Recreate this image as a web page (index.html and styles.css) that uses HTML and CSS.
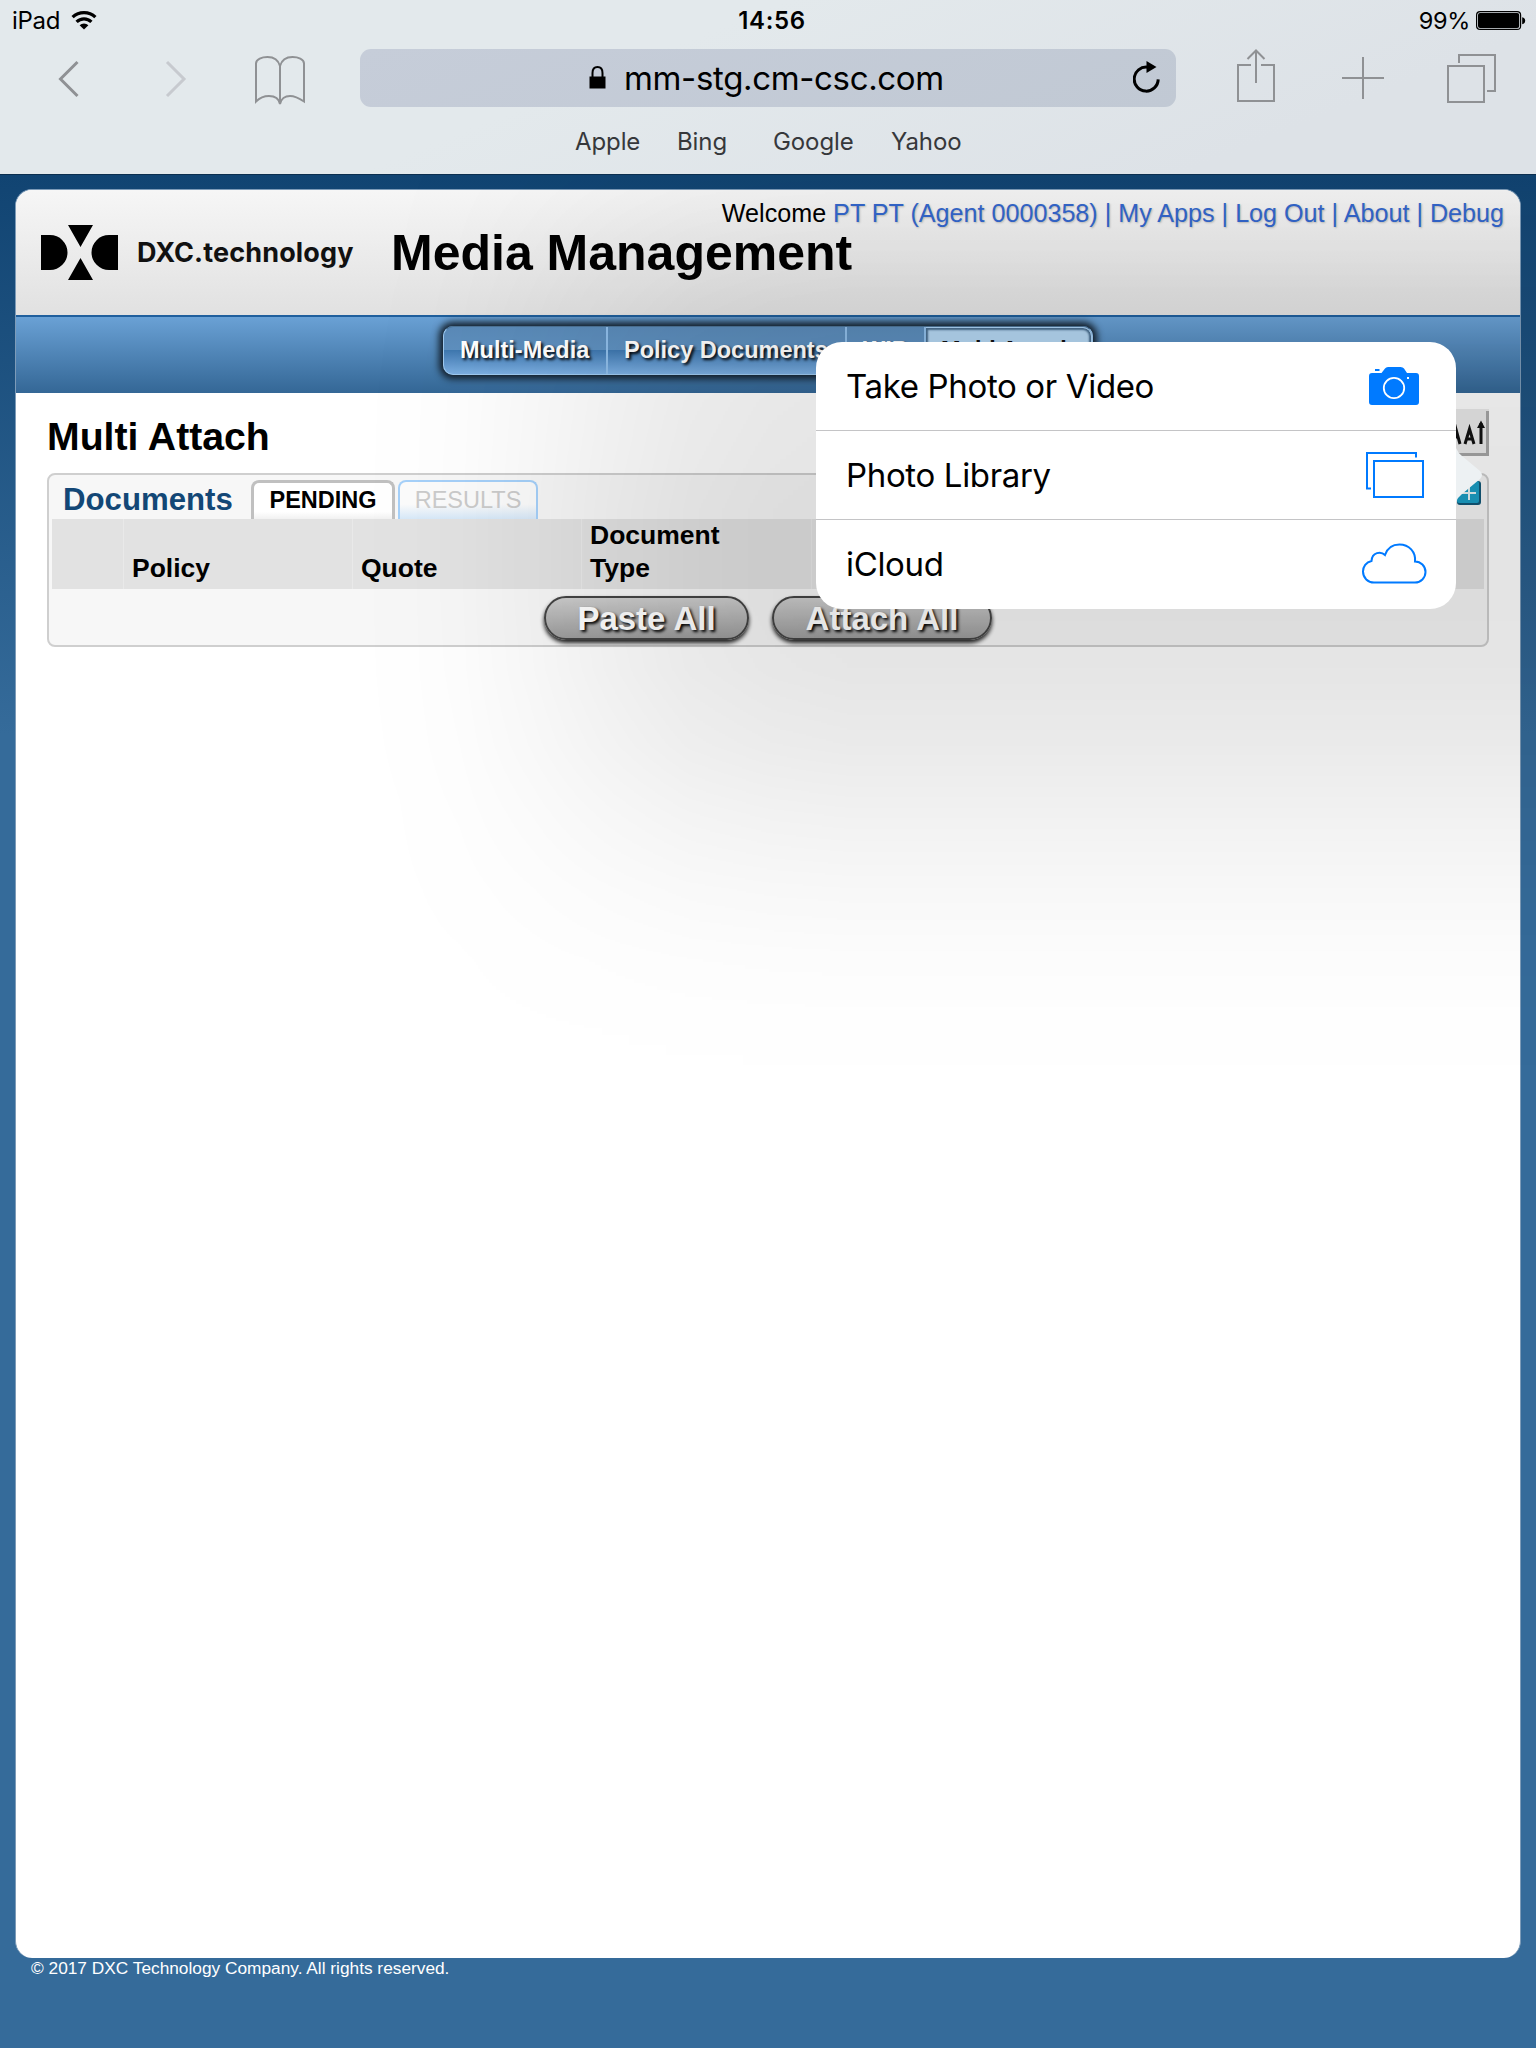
FILE: index.html
```html
<!DOCTYPE html>
<html lang="en">
<head>
<meta charset="utf-8">
<title>Media Management</title>
<link rel="stylesheet" href="styles.css">
</head>
<body>
<div class="browser">
  <header class="chrome">
    <div class="status">
      <div class="status-left"><span class="device">iPad</span>
        <svg class="wifi" width="26" height="20" viewBox="0 0 26 20"><g fill="none" stroke="#000" stroke-width="3.2"><path d="M1.6 7.2A16.3 16.3 0 0 1 24.4 7.2"/><path d="M5.6 11.9A10.5 10.5 0 0 1 20.4 11.9"/></g><path d="M8.6 15.2A6.6 6.6 0 0 1 17.400 15.2L13 19.600Z"/></svg>
      </div>
      <span class="clock">14:56</span>
      <div class="status-right"><span class="percent">99%</span>
        <svg class="battery" width="50" height="20" viewBox="0 0 50 20"><rect x=".6" y=".6" width="44" height="17.800" rx="3.500" fill="none" stroke="#000" stroke-width="1.200"/><rect x="2" y="2" width="41.200" height="15" rx="2"/><path d="M46.200 6.200q3 .6 3 3.500t-3 3.500z"/></svg>
      </div>
    </div>
    <div class="toolbar">
      <svg class="icon-back" width="22" height="38" viewBox="0 0 22 38"><path d="M19.500 2 2.500 19l17 17" fill="none" stroke="#8f9194" stroke-width="3"/></svg>
      <svg class="icon-forward" width="22" height="38" viewBox="0 0 22 38"><path d="M2 2l17 17L2 36" fill="none" stroke="#c7cacf" stroke-width="3"/></svg>
      <svg class="icon-book" width="52" height="50" viewBox="0 0 52 50"><path d="M26 49V11C24 4 18 2 13.500 2 8 2 2 4 2 8.500V46.500C5 43.500 10 41 15 41c6 0 10 3 11 8 1-5 5-8 10-8 5 0 9.500 2.500 14 5.500V8.500C50 4 44 2 38.500 2 34 2 28 4 26 11" fill="none" stroke="#8f9194" stroke-width="2"/></svg>
      <div class="address">
        <svg class="lock" width="17" height="23" viewBox="0 0 17 23"><path d="M.5 10.500h16V22.500H.5z"/><path d="M3.500 11V7q0-6 5-6t5 6v4" fill="none" stroke="#000" stroke-width="2"/></svg>
        <span class="url">mm-stg.cm-csc.com</span>
        <svg class="reload" width="28" height="32" viewBox="0 0 28 32"><path d="M25.200 18.400A12 12 0 1 1 14.500 6.200" fill="none" stroke="#000" stroke-width="3"/><path d="M13.500 0 23.500 6 13.500 12z"/></svg>
      </div>
      <svg class="icon-share" width="40" height="54" viewBox="0 0 40 54"><g fill="none" stroke="#8f9194" stroke-width="2"><path d="M15 16H2v36h36V16H25M20 34V2M11.500 10 20 1.500 28.500 10"/></g></svg>
      <svg class="icon-plus" width="42" height="42" viewBox="0 0 42 42"><path d="M21 0v42M0 21h42" stroke="#8f9194" stroke-width="2"/></svg>
      <svg class="icon-tabs" width="50" height="50" viewBox="0 0 50 50"><path d="M1 13h36v36H1zM12 10V2h36v36h-8" fill="none" stroke="#8f9194" stroke-width="2"/></svg>
    </div>
    <nav class="favorites"><span>Apple</span><span>Bing</span><span>Google</span><span>Yahoo</span></nav>
  </header>

  <div class="page">
    <main class="card">
      <div class="masthead">
        <div class="account">Welcome <span class="links">PT PT (Agent 0000358) | My Apps | Log Out | About | Debug</span></div>
        <div class="brand">
          <svg class="mark" width="80" height="57" viewBox="0 0 80 57"><path d="M1 11h9a17 17 0 0 1 0 35H1zM78 11h-9a17 17 0 0 0 0 35h9zM28 1h25L40.500 23zM40.500 34 53 56H28z"/></svg>
          <span class="wordmark">DXC.technology</span>
          <h1 class="app-title">Media Management</h1>
        </div>
      </div>
      <nav class="tabsbar">
        <div class="tabs">
          <span class="tab tab-media">Multi-Media</span>
          <span class="tab tab-policy">Policy Documents</span>
          <span class="tab tab-wip">WIP</span>
          <span class="tab tab-attach">Multi Attach</span>
        </div>
      </nav>
      <section class="content">
        <div class="content-head">
          <h2 class="content-title">Multi Attach</h2>
          <svg class="text-size" width="64" height="47" viewBox="0 0 64 47"><rect width="64" height="47" fill="#ececec"/><path d="M62.500 2v44M0 45.500h64" stroke="#a8a8a8" stroke-width="3"/><path d="M22 35 29 13l6 22M24 28h9M40 35l4.500-15L49 35M41.500 30h6M56 35V14" fill="none" stroke="#111" stroke-width="3"/><path d="M52 19 56 11.500 60 19z" fill="#111"/></svg>
        </div>
        <div class="panel">
          <div class="panel-head">
            <h3 class="panel-title">Documents</h3>
            <span class="subtab active">PENDING</span>
            <span class="subtab muted">RESULTS</span>
            <svg class="add" width="24" height="24" viewBox="0 0 24 24"><rect width="24" height="24" rx="3" fill="#125878"/><rect width="22" height="22" rx="2" fill="#1b9fc6"/><path d="M12 5v14M5 12h14" stroke="#e8f4f7" stroke-width="2"/></svg>
          </div>
          <div class="thead">
            <span></span><span class="th">Policy</span><span class="th">Quote</span><span class="th">Document<br>Type</span><span class="th"></span>
          </div>
          <div class="actions">
            <span class="btn btn-paste">Paste All</span>
            <span class="btn btn-attach">Attach All</span>
          </div>
        </div>
      </section>
    </main>
    <footer class="copyright">© 2017 DXC Technology Company. All rights reserved.</footer>
  </div>

  <div class="shade"></div>
  <div class="popover">
    <svg class="popover-arrow" width="27" height="56" viewBox="0 0 27 56"><path d="M0 0Q2 5 6 8L24 23q4 4 0 8L6 46Q2 49 0 54z" fill="#edf1f3"/></svg>
    <div class="option"><span>Take Photo or Video</span>
      <svg class="camera" width="50" height="38" viewBox="0 0 50 38"><path d="M3 6H12.500L16 1.500Q17 0 19 0H31.500Q34 0 35 1.500L38 6h9q3 0 3 3V35q0 3-3 3H3q-3 0-3-3V9Q0 6 3 6zM6 2h4.500v2H6z" fill="#007aff"/><circle cx="25" cy="21" r="10.200" fill="none" stroke="#fff" stroke-width="1.800"/><path d="M38 10h2v2h-2z" fill="#fff"/></svg>
    </div>
    <div class="option"><span>Photo Library</span>
      <svg class="photos" width="58" height="47" viewBox="0 0 58 47"><path d="M8 10h49v36H8zM50 6.500V2H1v35.500h4" fill="none" stroke="#007aff" stroke-width="2"/></svg>
    </div>
    <div class="option"><span>iCloud</span>
      <svg class="cloud" width="65" height="41" viewBox="0 0 65 41"><path d="M12 39.500H53a10.500 10.500 0 0 0 0-21C54 9 47 1.500 37.500 1.500 30 1.500 25 6 23 12 19 8 10 9 9.500 18 4 19 1 24 1 28.500 1 35 6 39.500 12 39.500z" fill="none" stroke="#007aff" stroke-width="2"/></svg>
    </div>
  </div>
</div>
</body>
</html>
```
FILE: styles.css
```css
* { box-sizing: border-box; }
body { margin: 0; width: 1536px; height: 2048px; overflow: hidden; font-family: "Liberation Sans", Arial, sans-serif; color: #000; }
h1, h2, h3 { margin: 0; }
svg { display: block; flex: none; }
.browser { position: relative; display: flex; flex-direction: column; height: 2048px; overflow: hidden; }

/* browser chrome */
.chrome { position: relative; z-index: 3; height: 175px; flex: none; font-family: Inter, sans-serif; background: linear-gradient(158deg, #e3e9ec 40%, #dde2e7 82%); border-bottom: 1px solid #0c2f4f; }
.status { height: 41px; display: grid; grid-template-columns: 1fr auto 1fr; align-items: center; padding: 0 10px 0 12px; font-size: 24px; line-height: 41px; }
.status-left { display: flex; align-items: center; gap: 11px; }
.device { letter-spacing: -0.3px; }
.wifi { margin-top: -2px; }
.status-right { display: flex; align-items: center; justify-content: flex-end; gap: 6px; }
.percent { font-size: 23.500px; letter-spacing: -0.300px; }
.clock { font-weight: 600; letter-spacing: .7px; padding-left: 6px; }
.toolbar { height: 74px; display: flex; align-items: flex-start; padding: 8px 30px 0 58px; }
.icon-back { margin-top: 11px; }
.icon-forward { margin: 11px 0 0 85px; }
.icon-book { margin: 6px 0 0 67px; }
.address { flex: none; display: flex; align-items: center; width: 816px; height: 58px; margin-left: 54px; border-radius: 11px; background: linear-gradient(160deg, #c6cdd9, #c1c9d4); padding: 0 15px 0 229px; }
.lock { margin-top: -1px; }
.url { margin: -1px 0 0 18px; font-size: 33px; letter-spacing: -0.350px; flex: 1; white-space: nowrap; }
.reload { margin-top: -3px; }
.icon-share { margin-left: 60px; }
.icon-plus { margin: 8px 0 0 66px; }
.icon-tabs { margin: 4px 0 0 63px; }
.favorites { display: flex; padding-left: 575px; font-size: 24px; letter-spacing: -0.1px; line-height: 54px; color: #36383b; }
.favorites span:nth-child(1) { width: 102px; }
.favorites span:nth-child(2) { width: 96px; }
.favorites span:nth-child(3) { width: 118px; }

/* page */
.page { flex: 1; padding: 14px 15px 0; background: linear-gradient(#114472, #356b9a 560px); }
.card { height: 1769px; background: #fff; border: 1px solid #7d9bb8; border-bottom: 0; border-radius: 17px; overflow: hidden; }
.masthead { height: 125px; padding-top: 9px; background: linear-gradient(#f6f6f6, #e1e1e1); }
.account { text-align: right; padding-right: 16px; font-size: 25.150px; line-height: 28px; }
.links { color: #3366cc; text-shadow: 1px 1px 2px #bbb; }
.brand { display: flex; align-items: center; padding-left: 24px; margin-top: -4px; height: 60px; }
.mark { margin-top: -1px; }
.wordmark { width: 217px; margin-left: 17px; font: 700 27px/40px Inter, sans-serif; letter-spacing: .15px; color: #111; }
.app-title { margin-left: 37px; font-size: 50px; line-height: 56px; white-space: nowrap; }
.tabsbar { height: 78px; border-top: 2px solid #1f5f9d; background: linear-gradient(#6aa1d5, #346796); padding: 9px 0 0 427px; }
.tabs { display: flex; width: 650px; height: 49px; border: 1px solid #9fcaf0; border-top-color: #4c7396; border-radius: 10px; background: linear-gradient(#5a8ab8, #5e90bf 49%, #3f78b0 50%, #7cafe2); box-shadow: 0 0 7px 4px #14202c; }
.tab { font-size: 23.500px; line-height: 47px; font-weight: 700; color: #fff; text-shadow: 2px 2px 3px #000; padding-left: 16px; border-right: 2px solid #8fbde8; white-space: nowrap; }
.tab-media { width: 164px; }
.tab-policy { width: 239px; }
.tab-wip { width: 79px; }
.tab-attach { flex: 1; padding-left: 15px; border: 1px solid #a9d0f2; border-left: 0; border-radius: 0 9px 9px 0; background: #b4d5f0; box-shadow: inset 0 0 2px 2px #45698a; color: #111; text-shadow: none; line-height: 45px; }
.content { padding: 15px 31px 0 31px; }
.content-head { display: flex; justify-content: space-between; height: 65px; }
.content-title { font-size: 39.200px; line-height: 58px; }
.text-size { margin-top: 1px; }
.panel { height: 174px; border: 2px solid #cfcfcf; border-radius: 8px; background: #f7f7f7; padding: 0 3px; }
.panel-head { display: flex; height: 44px; padding-left: 11px; }
.panel-title { width: 188px; font-size: 31.200px; line-height: 50px; color: #134776; }
.subtab { margin-top: 5px; height: 39px; font-size: 23.500px; line-height: 36px; text-align: center; border-radius: 8px 8px 0 0; }
.active { width: 144px; font-weight: 700; border: 3px solid #c0c0c0; border-bottom: 0; background: linear-gradient(#fff 80%, #f1f1f1); line-height: 34px; }
.muted { width: 140px; margin-left: 3px; color: #cbcbcb; border: 2px solid #a5d0f9; border-bottom: 0; background: linear-gradient(#fbfbfb 60%, #d6e8f8); }
.add { margin: 6px 3px 0 auto; }
.thead { display: grid; grid-template-columns: 71px 229px 229px 230px 1fr; height: 70px; align-items: stretch; background: #e2e2e2; }
.th { display: flex; align-items: flex-end; border-left: 1px solid #e9e9e9; padding: 0 0 4px 8px; font-size: 26.500px; line-height: 33px; font-weight: 700; }
.actions { display: flex; justify-content: center; gap: 23px; padding-top: 7px; }
.btn { height: 44px; border: 2px solid #444; border-radius: 22px; text-align: center; font-size: 33px; line-height: 41px; font-weight: 700; color: #fff; text-shadow: 2px 2px 3px #000; background: linear-gradient(#cdcdcd, #9d9d9d); box-shadow: 0 3px 4px #222; }
.btn-paste { width: 205px; }
.btn-attach { width: 220px; }
.copyright { padding-left: 16px; font-size: 17.300px; line-height: 21px; color: #fff; }

/* wide soft shade behind the popover */
.shade { position: absolute; z-index: 1; inset: 0; background: rgba(0, 0, 0, .104); pointer-events: none;
  mask-image: linear-gradient(90deg, transparent 340px, rgba(0,0,0,.03) 400px, rgba(0,0,0,.12) 460px, rgba(0,0,0,.32) 530px, rgba(0,0,0,.59) 610px, rgba(0,0,0,.82) 690px, rgba(0,0,0,.94) 770px, #000 850px),
    linear-gradient(180deg, rgba(0,0,0,.25) 170px, rgba(0,0,0,.62) 290px, rgba(0,0,0,.9) 400px, #000 510px, #000 600px, rgba(0,0,0,.94) 670px, rgba(0,0,0,.76) 745px, rgba(0,0,0,.51) 815px, rgba(0,0,0,.27) 890px, rgba(0,0,0,.11) 960px, rgba(0,0,0,.03) 1030px, transparent 1110px);
  mask-composite: intersect; }

/* file source popover */
.popover { position: absolute; z-index: 2; left: 816px; top: 342px; width: 640px; height: 267px; border-radius: 26px; background: #fff; }
.popover-arrow { position: absolute; left: 640px; top: 106px; }
.option { display: flex; align-items: center; justify-content: space-between; height: 89px; padding-left: 30px; font: 33px/88px Inter, sans-serif; letter-spacing: -0.350px; border-bottom: 1px solid #c4c4c6; }
.option:last-child { border-bottom: 0; }
.option:last-child span { margin-top: -2px; }
.camera { margin-right: 37px; }
.photos { margin: -2px 32px 0 0; }
.cloud { margin: -2px 29px 0 0; }
```
